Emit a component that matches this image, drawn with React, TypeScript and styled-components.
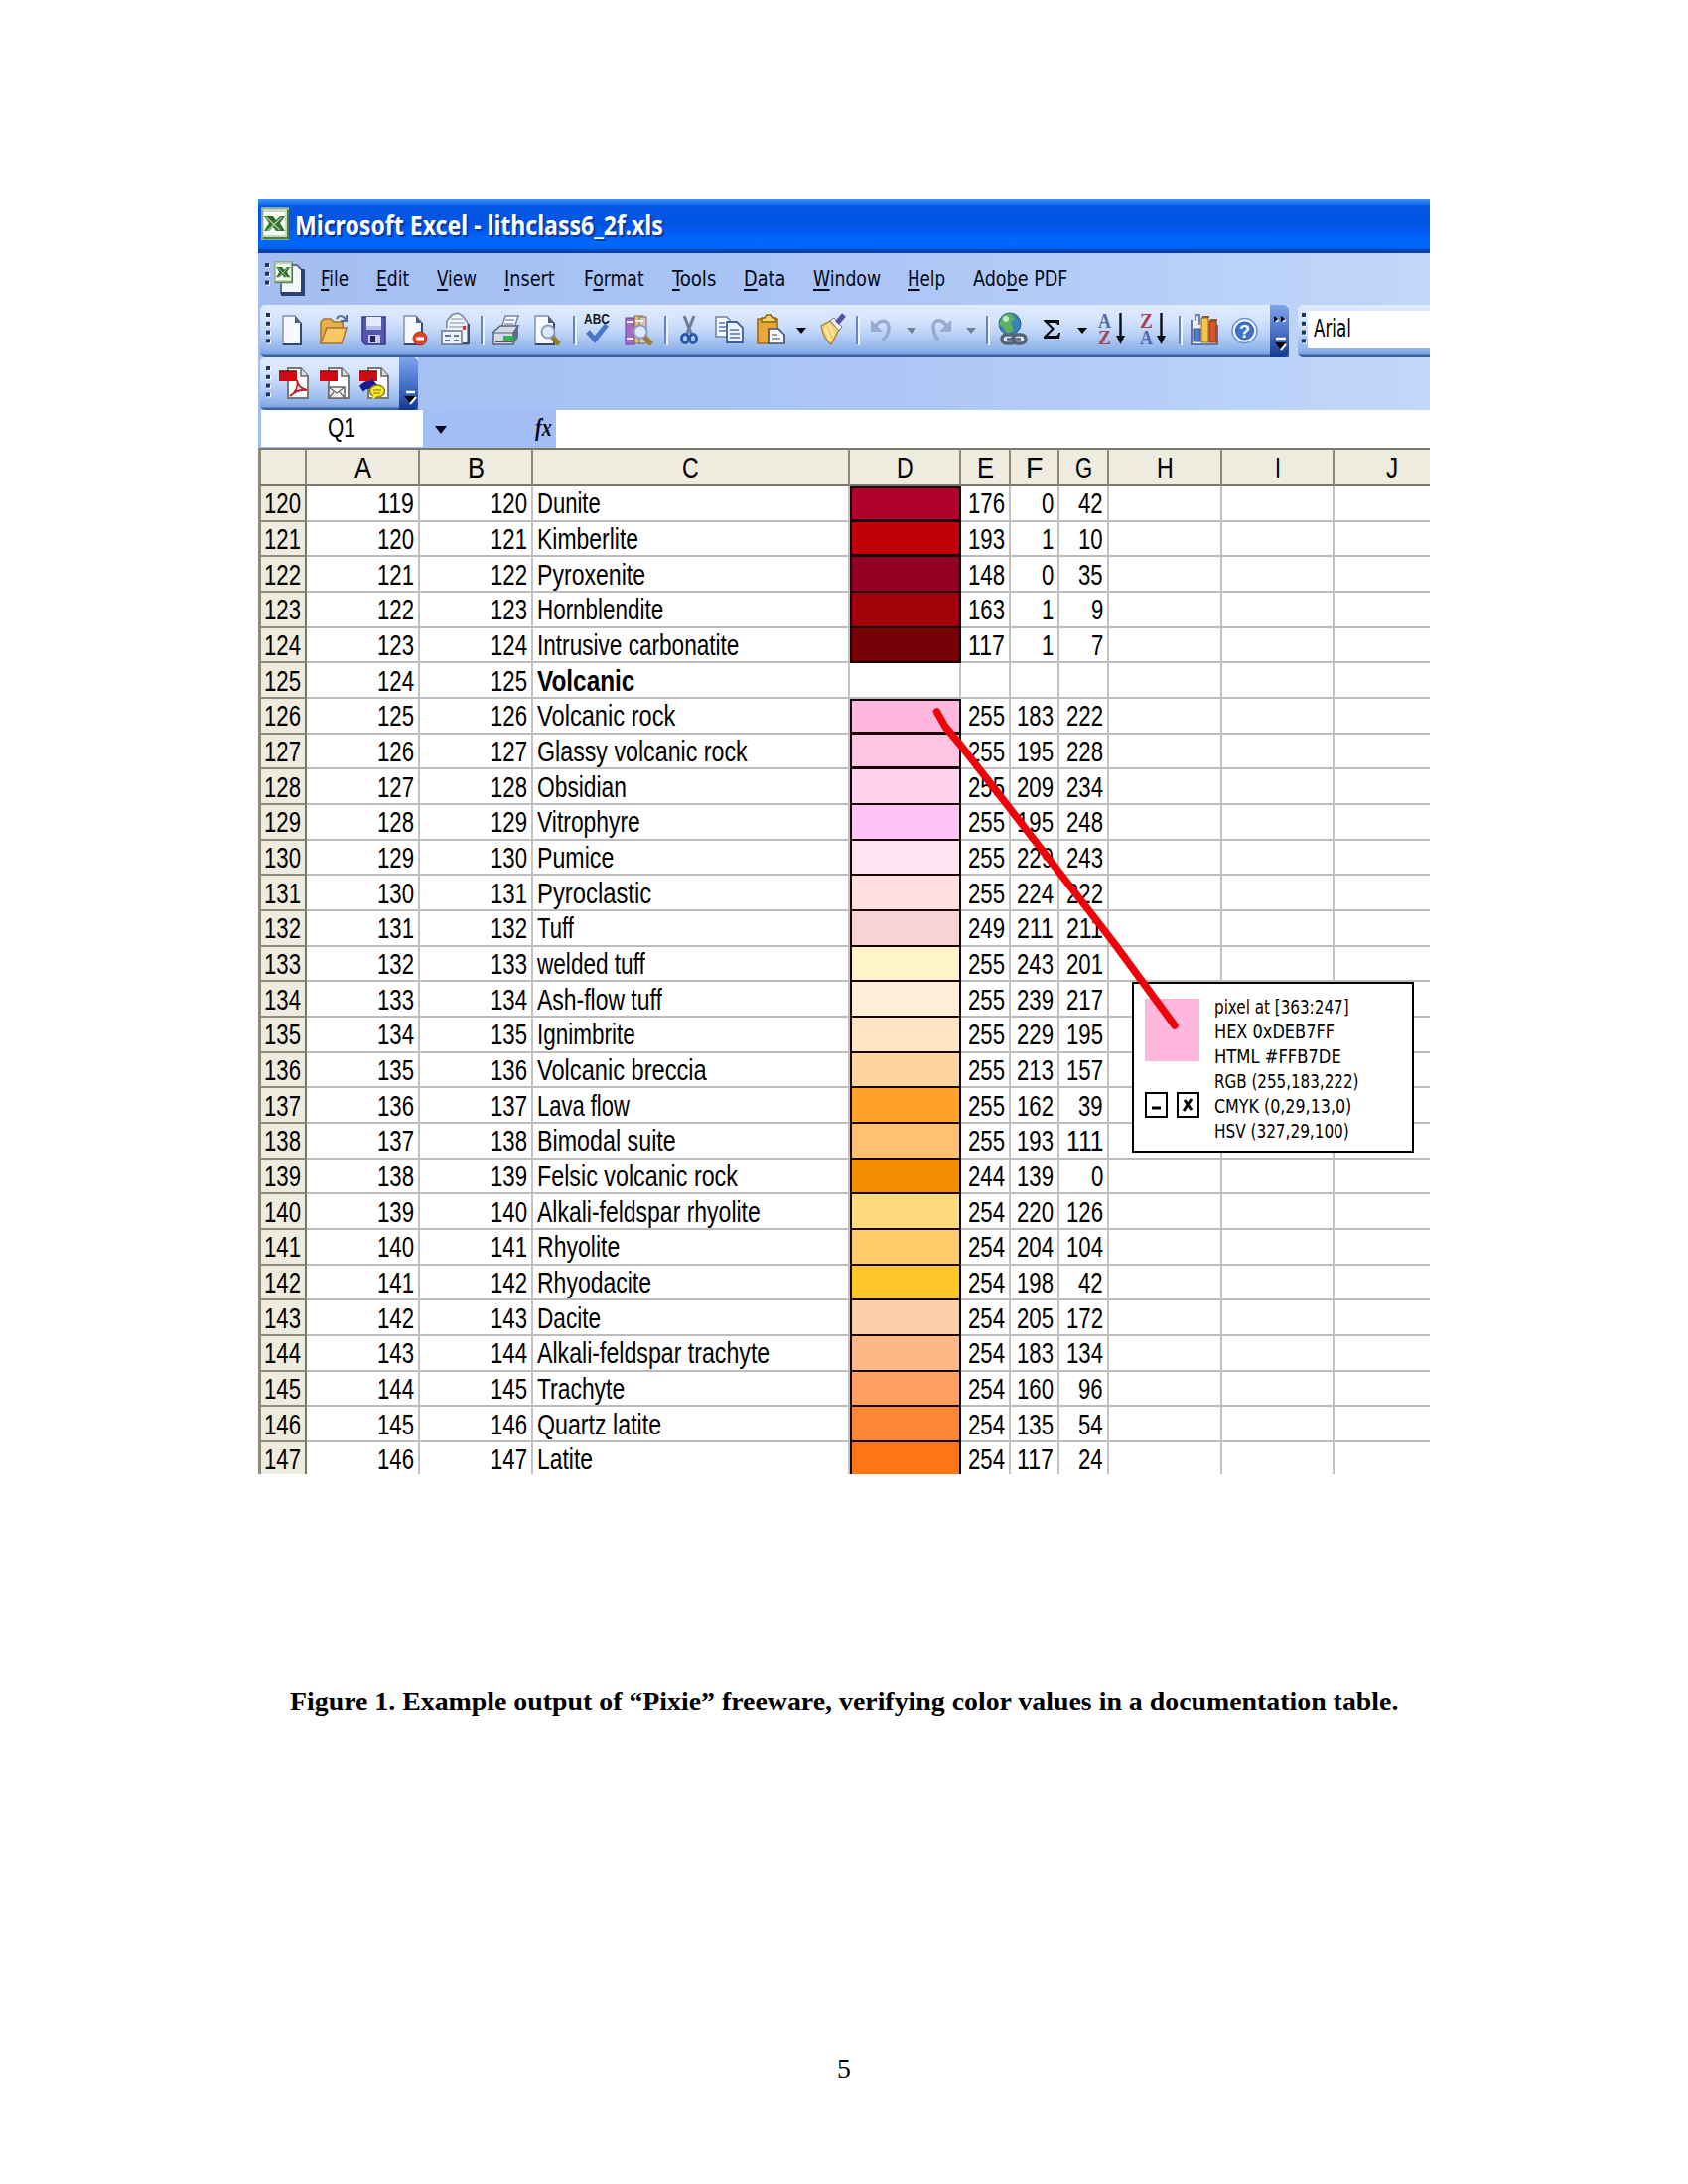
import React, { useLayoutEffect, useRef, useState } from 'react';
import styled, { createGlobalStyle } from 'styled-components';

const GlobalStyle = createGlobalStyle`
  html, body { margin: 0; padding: 0; background: #fff; }
  * { box-sizing: border-box; }
`;

const arial = '"Liberation Sans", Arial, sans-serif';
const tahoma = '"DejaVu Sans Condensed", "DejaVu Sans", Tahoma, sans-serif';
const times = '"Liberation Serif", "Times New Roman", serif';

/* ---------- text condensed to a given width ---------- */

const FitBox = styled.span<{ $w: number }>`
  display: inline-block;
  width: ${p => p.$w}px;
  white-space: nowrap;
  flex: none;
`;
const FitInner = styled.span`
  display: inline-block;
  transform-origin: 0 50%;
  white-space: pre;
`;

function Fit({ w, children }: { w: number; children: React.ReactNode }) {
  const ref = useRef<HTMLSpanElement>(null);
  const [scale, setScale] = useState(1);
  useLayoutEffect(() => {
    if (ref.current) setScale(w / ref.current.offsetWidth);
  }, [w]);
  return (
    <FitBox $w={w}>
      <FitInner ref={ref} style={{ transform: `scaleX(${scale})` }}>{children}</FitInner>
    </FitBox>
  );
}

/* ---------- page ---------- */

const Page = styled.main`
  width: 1700px;
  height: 2200px;
  padding-top: 200px;
  display: flex;
  flex-direction: column;
  align-items: center;
  background: #fff;
  color: #000;
  overflow: hidden;
`;
const Shot = styled.section`
  position: relative;
  width: 1180px;
  height: 1285px;
  flex: none;
  display: flex;
  flex-direction: column;
  overflow: hidden;
  background: #fff;
`;
const Caption = styled.p`
  margin: 213px 0 0;
  font: bold 27.8px/32px ${times};
`;
const PageNumber = styled.footer`
  margin-top: 338px;
  font: 27.8px/32px ${times};
`;

/* ---------- window chrome ---------- */

const TitleBar = styled.header`
  height: 55px;
  flex: none;
  display: flex;
  align-items: center;
  padding: 0 0 3px 3px;
  gap: 6px;
  background: linear-gradient(#3a94ff 0, #1b7af4 4px, #0458e4 8px, #0054e4 26px, #005cf8 36px, #0069ff 43px, #0064fa 50px, #0a3fae 52px, #0a3fae 55px);
`;
const Title = styled.h1`
  margin: 0;
  padding-top: 1px;
  font: bold 26px/40px "Noto Sans", "Open Sans", sans-serif;
  color: #fff;
  text-shadow: 2px 2px 1px #08379c;
`;
const MenuBar = styled.nav`
  height: 52px;
  flex: none;
  display: flex;
  align-items: flex-start;
  background: linear-gradient(90deg, #a4bef2, #aac5f6 50%, #c2d7f9);
`;
const MenuGrip = styled.div`
  margin: 8px 0 0 7px;
  height: 40px;
`;
const MenuItem = styled.div<{ $gap: number }>`
  margin-left: ${p => p.$gap}px;
  padding-top: 12px;
  font: 22px/28px ${tahoma};
  color: #06091a;
  u { text-decoration-thickness: 2px; text-underline-offset: 3px; text-decoration-skip-ink: none; }
`;
const ToolRow = styled.div`
  height: 53px;
  flex: none;
  display: flex;
  padding-left: 2px;
  gap: 9px;
  background: linear-gradient(90deg, #a4bef2, #aac5f6 50%, #c2d7f9);
`;
const toolFill = 'linear-gradient(#dfeafd 0, #d6e5fd 14px, #bdd4f8 28px, #8fb2e9 46px, #7ba2e0 50px, #3c619f 51px, #3c619f 53px)';
const ToolBar = styled.div<{ $w: number }>`
  width: ${p => p.$w}px;
  height: 53px;
  flex: none;
  display: flex;
  align-items: flex-start;
  border-radius: 5px 0 0 5px;
  background: ${toolFill};
`;
const FontBar = styled.div`
  flex: 1;
  height: 53px;
  display: flex;
  border-radius: 5px 0 0 5px;
  background: ${toolFill};
`;
const FontField = styled.div`
  flex: 1;
  height: 38px;
  margin: 6px 0 0 2px;
  padding: 4px 0 0 6px;
  background: #fff;
  font: 24px/28px ${tahoma};
`;
const Tool = styled.svg<{ $gap: number; $top: number }>`
  margin-left: ${p => p.$gap}px;
  margin-top: ${p => p.$top}px;
  height: 38px;
  flex: none;
`;
const Divider = styled.i<{ $gap: number }>`
  margin: 11px 0 0 ${p => p.$gap}px;
  width: 2px;
  height: 29px;
  flex: none;
  background: #6785bd;
  box-shadow: 2px 1px 0 #eef4ff;
`;
const EndCap = styled.div`
  width: 19px;
  height: 53px;
  margin-left: auto;
  border-radius: 0 5px 5px 0;
  background: linear-gradient(#7ea4ea, #4a73c8 50%, #123a92);
`;
const FormulaBar = styled.div`
  height: 38px;
  flex: none;
  display: flex;
  background: #a3bef3;
`;
const NameBox = styled.div`
  width: 163px;
  height: 37px;
  margin-left: 3px;
  padding-left: 67px;
  background: #fff;
  font: 27px/36px ${arial};
`;
const FxZone = styled.div`
  width: 134px;
  display: flex;
  justify-content: space-between;
  padding: 0 4px 0 11px;
`;
const FxLabel = styled.span`
  font: italic bold 26px/36px ${times};
  color: #05081a;
`;
const Formula = styled.div`
  flex: 1;
  background: #fff;
`;

/* ---------- sheet ---------- */

const Sheet = styled.div`
  display: grid;
  grid-template-columns: 49px 114px 114px 319px 112px 50px 49px 50px 114px 113px 96px;
  grid-template-rows: 39px;
  grid-auto-rows: 35.68px;
  font: 28.6px/33px ${arial};
`;
const HeadCell = styled.div`
  display: flex;
  justify-content: center;
  align-items: center;
  padding-top: 1px;
  background: #eeebdf;
  border-top: 2px solid #77776c;
  border-bottom: 2px solid #77776c;
  border-right: 2px solid #8a8a7d;
  &:first-child { border-left: 3px solid #8b8b78; }
  &:nth-child(11) { border-right: 0; padding-left: 20px; }
`;
const RowHead = styled.div`
  display: flex;
  align-items: center;
  justify-content: flex-end;
  padding: 2px 4px 0 0;
  background: #eeebdf;
  border-left: 3px solid #8b8b78;
  border-right: 2px solid #77776c;
  border-bottom: 2px solid #8b8b80;
`;
const Cell = styled.div<{ $last?: boolean; $left?: boolean; $bold?: boolean }>`
  display: flex;
  align-items: center;
  justify-content: ${p => (p.$left ? 'flex-start' : 'flex-end')};
  padding: 2px 4px 0;
  font-weight: ${p => (p.$bold ? 700 : 400)};
  border-bottom: 2px solid #bcbcbc;
  border-right: ${p => (p.$last ? '0' : '2px solid #c2c2c2')};
`;
const Swatch = styled.div<{ $c: string; $top?: boolean; $thick?: boolean }>`
  background: ${p => p.$c};
  border: 2px solid #180406;
  border-top-width: ${p => (p.$top ? 2 : 0)}px;
  border-bottom-width: ${p => (p.$thick ? 3 : 2)}px;
`;

/* ---------- overlays ---------- */

const Pixie = styled.aside`
  position: absolute;
  left: 880px;
  top: 789px;
  width: 284px;
  height: 172px;
  display: flex;
  gap: 15px;
  padding: 15px 0 0 11px;
  background: #fff;
  border: 2px solid #000;
`;
const PixieSide = styled.div`
  width: 55px;
`;
const PixieColor = styled.div`
  height: 63px;
  background: #ffb7de;
`;
const PixieButtons = styled.div`
  display: flex;
  justify-content: space-between;
  margin-top: 31px;
`;
const PixieText = styled.div`
  margin-top: -4px;
  display: flex;
  flex-direction: column;
  font: 19.6px/25px ${tahoma};
`;
const Pointer = styled.svg`
  position: absolute;
  left: 670px;
  top: 500px;
`;

/* ---------- icons ---------- */

const Dots = ({ n = 4 }: { n?: number }) => (
  <>
    {Array.from({ length: n }, (_, i) => (
      <g key={i}>
        <rect x="1" y={3 + i * 8.8} width="4" height="4" fill="#fff" />
        <rect x="0" y={2 + i * 8.8} width="4" height="4" fill="#1f335f" />
      </g>
    ))}
  </>
);
const Icon = ({ gap, w, top = 6, children }: { gap: number; w: number; top?: number; children: React.ReactNode }) => (
  <Tool $gap={gap} $top={top} width={w} viewBox={`0 0 ${w} 38`} overflow="visible">{children}</Tool>
);
const Arrow = ({ gap, c = '#000' }: { gap: number; c?: string }) => (
  <Icon gap={gap} w={9}><path d="M0 17h10l-5 6z" fill={c} /></Icon>
);
const Sheetlet = ({ x = 0, y = 5, w = 19, h = 29 }: { x?: number; y?: number; w?: number; h?: number }) => (
  <g>
    <path d={`M${x + 1} ${y}h${w - 7}l6 7v${h - 7}h${-(w - 1)}z`} fill="#f6f9ff" stroke="#7c8dac" strokeWidth="1.4" />
    <path d={`M${x + w} ${y + 7}v${h - 7}h${-(w - 1)}`} fill="none" stroke="#34486f" strokeWidth="2" />
    <path d={`M${x + w - 6} ${y}v7h6z`} fill="#4b5f86" />
  </g>
);
const Xls = ({ s }: { s: number }) => (
  <g transform={`scale(${s})`}>
    <rect x="1" y="1" width="26" height="31" fill="#c9d8c4" stroke="#8fae8d" strokeWidth="2" />
    <rect x="3" y="5" width="21" height="23" fill="#fafff4" />
    <path d="M3 9h9l3 4 4-4h5l-5 7 5 8h-9l-3-4-4 4H3l5-8z" fill="#2f7130" />
    <path d="M5 10l14 13M21 10L6 24" stroke="#a9d39c" strokeWidth="1.2" />
    <path d="M2 31h25V3" fill="none" stroke="#4d7f3c" strokeWidth="2" />
  </g>
);
const Pdf = () => (
  <g>
    <path d="M9 3h13l7 8v22H9z" fill="#fff" stroke="#77797f" strokeWidth="2" />
    <path d="M22 3v8h7" fill="#ddd" stroke="#666" strokeWidth="1.5" />
    <rect x="0" y="6" width="18" height="10" fill="#cf0a12" />
    <path d="M0 6h18" stroke="#7d0a0a" strokeWidth="1.5" />
  </g>
);
const Lens = ({ x, y }: { x: number; y: number }) => (
  <g>
    <path d={`M${x + 4} ${y + 5}l7 8`} stroke="#9b7b2c" strokeWidth="5" />
    <circle cx={x} cy={y} r="6.5" fill="#dce9fb" stroke="#8c9cc0" strokeWidth="2" />
  </g>
);

const StandardTools = () => (
  <>
    <Icon gap={6} w={4}><Dots /></Icon>
    <Icon gap={12} w={20}><Sheetlet /></Icon>
    <Icon gap={17} w={30}>
      <path d="M2 33V11l3-3h7l3 3h9v6" fill="#e7b04c" stroke="#a1762e" strokeWidth="1.5" />
      <path d="M2 33l6-16h20l-5 16z" fill="#fcc767" stroke="#a87528" strokeWidth="1.5" />
      <path d="M18 8c2-4 7-4 9 1m1-5v6h-6" fill="none" stroke="#536d99" strokeWidth="2" />
    </Icon>
    <Icon gap={13} w={25}>
      <path d="M1 6h23v28H4l-3-3z" fill="#5656ad" stroke="#383987" strokeWidth="1.5" />
      <rect x="5" y="6" width="15" height="13" fill="#e5ecff" />
      <path d="M5 15h15v4H5z" fill="#b7bfe6" />
      <rect x="7" y="24" width="12" height="9" fill="#c4c9ea" />
      <rect x="9" y="25" width="5" height="7" fill="#23245f" />
    </Icon>
    <Icon gap={17} w={26}>
      <Sheetlet x={0} />
      <circle cx="17" cy="28" r="7" fill="#dd4526" stroke="#b03319" />
      <rect x="13" y="26.5" width="8" height="3" fill="#fff" />
    </Icon>
    <Icon gap={12} w={30}>
      <path d="M6 17V10l5-6 6-2 5 3 5 7v22H12" fill="#f2f5fc" stroke="#76829e" strokeWidth="1.5" />
      <path d="M9 12h15M10 8h12M8 16h17" fill="none" stroke="#a5aec2" strokeWidth="1.3" />
      <rect x="22" y="15" width="3" height="4" fill="#c23832" />
      <path d="M1 20h20v14H1z" fill="#eef3fb" stroke="#65748f" strokeWidth="1.5" />
      <path d="M4 25h6M4 30h5M13 25h5M13 30h5" stroke="#58759f" strokeWidth="2" />
      <path d="M28 13v20h-6" fill="none" stroke="#394c70" strokeWidth="2" />
    </Icon>
    <Divider $gap={10} />
    <Icon gap={10} w={28}>
      <path d="M9 17l4-12h13l-4 12z" fill="#fafcff" stroke="#7685a3" strokeWidth="1.5" />
      <path d="M13 9h9M12 13h9" stroke="#8a97b4" strokeWidth="1.3" />
      <path d="M1 21l7-6h18l-5 7v12H1z" fill="#d5dbe6" stroke="#55627c" strokeWidth="1.5" />
      <path d="M21 22l5-7v12l-5 7z" fill="#5e6d88" />
      <path d="M1 22h20" stroke="#55627c" />
      <path d="M11 25h10v7H11z" fill="#36b04a" /><path d="M3 31h17" stroke="#555" strokeWidth="2" />
    </Icon>
    <Icon gap={14} w={28}><Sheetlet x={0} w={20} /><Lens x={14} y={21} /></Icon>
    <Divider $gap={11} />
    <Icon gap={9} w={28}>
      <text x="0" y="13" fontFamily="Liberation Sans, sans-serif" fontWeight="bold" fontSize="14" textLength="26" lengthAdjust="spacingAndGlyphs" fill="#16181e">ABC</text>
      <path d="M4 21l7 8L23 14" fill="none" stroke="#4976cb" strokeWidth="5" />
    </Icon>
    <Icon gap={13} w={29}>
      <rect x="1" y="7" width="9" height="27" fill="#a66ac7" stroke="#65438b" />
      <rect x="10" y="5" width="9" height="28" fill="#e1bc73" stroke="#8b713e" />
      <rect x="15" y="6" width="7" height="27" fill="#d8c9c0" stroke="#7f6c68" />
      <path d="M2 11h7M2 28h7M11 10h8" stroke="#f4eefa" strokeWidth="2" />
      <Lens x={16} y={21} />
    </Icon>
    <Divider $gap={11} />
    <Icon gap={14} w={18}>
      <path d="M4 5l8 20M14 5L6 25" stroke="#6e7c98" strokeWidth="3" />
      <ellipse cx="5" cy="28" rx="3.5" ry="4.5" fill="none" stroke="#2858a8" strokeWidth="3" />
      <ellipse cx="13" cy="28" rx="3.5" ry="4.5" fill="none" stroke="#2858a8" strokeWidth="3" />
    </Icon>
    <Icon gap={17} w={29}>
      <path d="M1 6h11l5 6v14H1z" fill="#f7faff" stroke="#6d7fa2" strokeWidth="1.5" />
      <path d="M4 12h6M4 16h8M4 20h7" stroke="#5376b8" strokeWidth="1.5" />
      <path d="M12 11h10l6 6v15H12z" fill="#eef4ff" stroke="#3d5f9f" strokeWidth="1.8" />
      <path d="M15 19h9M15 23h10M15 27h10" stroke="#4d73b8" strokeWidth="1.5" />
    </Icon>
    <Icon gap={12} w={30}>
      <path d="M2 8h20v25H2z" fill="#eba63b" stroke="#9a6a1d" strokeWidth="1.6" />
      <path d="M6 11V7h3l2-3h4l2 3h3v4z" fill="#f4d25f" stroke="#836014" strokeWidth="1.4" />
      <path d="M13 18h10l6 6v9H13z" fill="#f4f6fc" stroke="#475371" strokeWidth="1.7" />
      <path d="M16 24h6M16 28h9" stroke="#7c8095" strokeWidth="1.5" />
    </Icon>
    <Arrow gap={11} />
    <Icon gap={15} w={26}>
      <path d="M1 15l9-5 9 9-8 15q-8-7-10-19z" fill="#f6d476" stroke="#a38138" strokeWidth="1.4" />
      <path d="M5 17l5 12M9 14l5 11" stroke="#fff0b7" strokeWidth="1.6" />
      <path d="M10 10l4-3 8 9-3 4z" fill="#eef0f6" stroke="#777" />
      <path d="M17 12l7-8" stroke="#5450a5" strokeWidth="5" />
    </Icon>
    <Divider $gap={10} />
    <Icon gap={12} w={23}>
      <path d="M5 17c4-9 14-9 14 0 0 6-2 9-6 13" fill="none" stroke="#98aad3" strokeWidth="3.4" />
      <path d="M1 9v12h12z" fill="#98aad3" />
    </Icon>
    <Arrow gap={14} c="#727e99" />
    <Icon gap={15} w={22}>
      <path d="M17 17C13 7 3 8 3 16c0 6 2 10 5 14" fill="none" stroke="#98aad3" strokeWidth="3.4" />
      <path d="M21 9v12H9z" fill="#98aad3" />
    </Icon>
    <Arrow gap={14} c="#727e99" />
    <Divider $gap={11} />
    <Icon gap={9} w={31}>
      <circle cx="13" cy="13" r="11" fill="#3b81bd" stroke="#2b5d8c" />
      <path d="M4 8q5-7 11-5l3 5-4 4 3 7-6 4-5-7-4-2z" fill="#5bb35c" />
      <circle cx="9" cy="8" r="3" fill="#bfe8c4" />
      <rect x="5" y="24" width="14" height="9" rx="4.5" fill="#dfe8f8" stroke="#56617a" strokeWidth="3.4" />
      <rect x="16" y="24" width="13" height="9" rx="4.5" fill="#dfe8f8" stroke="#56617a" strokeWidth="3.4" />
      <path d="M10 28.5h14" stroke="#56617a" strokeWidth="2.5" />
    </Icon>
    <Icon gap={15} w={19}>
      <path d="M1 9h16v5h-2q0-2-3-2H6l6 6-7 7h8q3 0 3-3h2l-1 6H1v-2l8-8-8-8z" fill="#05070f" />
    </Icon>
    <Arrow gap={16} />
    <Icon gap={12} w={28}>
      <text x="0" y="17" fontFamily="Liberation Serif, serif" fontWeight="bold" fontSize="20" textLength="13" lengthAdjust="spacingAndGlyphs" fill="#5168aa">A</text>
      <text x="0" y="34" fontFamily="Liberation Serif, serif" fontWeight="bold" fontSize="20" textLength="13" lengthAdjust="spacingAndGlyphs" fill="#a84458">Z</text>
      <path d="M22.500 2v25" stroke="#0a0c14" strokeWidth="2.400" /><path d="M18 25h9l-4.500 9z" fill="#0a0c14" />
    </Icon>
    <Icon gap={14} w={28}>
      <text x="0" y="17" fontFamily="Liberation Serif, serif" fontWeight="bold" fontSize="20" textLength="13" lengthAdjust="spacingAndGlyphs" fill="#a84458">Z</text>
      <text x="0" y="34" fontFamily="Liberation Serif, serif" fontWeight="bold" fontSize="20" textLength="13" lengthAdjust="spacingAndGlyphs" fill="#5168aa">A</text>
      <path d="M21.500 2v25" stroke="#0a0c14" strokeWidth="2.400" /><path d="M17 25h9l-4.500 9z" fill="#0a0c14" />
    </Icon>
    <Divider $gap={11} />
    <Icon gap={10} w={28}>
      <path d="M1 9v25h26V14" fill="#eef2fb" stroke="#4c5a7a" strokeWidth="1.6" />
      <path d="M5 10V4h4v10" fill="none" stroke="#6c7a98" strokeWidth="1.8" />
      <rect x="3" y="18" width="7" height="13" fill="#4e7ac7" stroke="#304f87" />
      <rect x="11" y="7" width="7" height="25" fill="#f4c64c" stroke="#8f6a1c" />
      <rect x="19" y="10" width="7" height="22" fill="#d9552a" stroke="#8a2f17" />
      <path d="M12 6h7M20 9h7" stroke="#8a5a2a" strokeWidth="2" />
    </Icon>
    <Icon gap={13} w={27}>
      <circle cx="13.500" cy="20" r="12.500" fill="#eaf2ff" stroke="#6d93cf" strokeWidth="1.500" />
      <circle cx="13.500" cy="20" r="9" fill="#3c73cb" stroke="#2c58a4" />
      <text x="13.500" y="26.500" textAnchor="middle" fontFamily="Liberation Sans, sans-serif" fontWeight="bold" fontSize="18" fill="#fff">?</text>
    </Icon>
    <EndCap>
      <svg width="19" height="53" viewBox="0 0 19 53">
        <path d="M4 11l4 3-4 3zM11 11l4 3-4 3z" fill="#000" />
        <path d="M6 17l3-2M13 17l3-2" stroke="#fff" strokeWidth="1.500" />
        <path d="M6 34h10" stroke="#fff" strokeWidth="2.500" />
        <path d="M5 38h11l-5.500 7z" fill="#000" /><path d="M16 40l-5 6" stroke="#fff" strokeWidth="2" />
      </svg>
    </EndCap>
  </>
);

const PdfTools = () => (
  <>
    <Icon gap={6} w={4} top={7}><Dots /></Icon>
    <Icon gap={9} w={30} top={8}>
      <Pdf />
      <path d="M11 31c6-4 9-10 7-16 1 6 5 9 10 10-6-1-12 1-17 6z" fill="none" stroke="#c61a1e" strokeWidth="1.800" />
    </Icon>
    <Icon gap={11} w={30} top={8}>
      <Pdf />
      <rect x="9" y="22" width="16" height="11" fill="#f5f5f5" stroke="#666" strokeWidth="1.500" />
      <path d="M9 22l8 6 8-6M9 33l5-6M25 33l-5-6" fill="none" stroke="#666" strokeWidth="1.300" />
    </Icon>
    <Icon gap={10} w={30} top={8}>
      <Pdf />
      <path d="M0 21q5-6 12-5v-3l7 8-7 7v-4q-6-1-8 3z" fill="#1a1a94" />
      <ellipse cx="18" cy="26" rx="7.500" ry="6" fill="#f7ea2c" stroke="#87800f" strokeWidth="1.500" />
      <path d="M14 30l-1 5 5-4z" fill="#f7ea2c" />
      <path d="M14 25h8M14 28h7" stroke="#7d750c" strokeWidth="1.200" />
    </Icon>
    <EndCap>
      <svg width="19" height="53" viewBox="0 0 19 53">
        <path d="M7 35h9" stroke="#fff" strokeWidth="2.500" />
        <path d="M5 39h12l-6 7z" fill="#000" /><path d="M17 40l-6 7" stroke="#fff" strokeWidth="2" />
      </svg>
    </EndCap>
  </>
);

/* ---------- data ---------- */

type RowData = [number, string, number, [number, number, number] | null];
const rows: RowData[] = [
  [120, 'Dunite', 64, [176, 0, 42]],
  [121, 'Kimberlite', 102, [193, 1, 10]],
  [122, 'Pyroxenite', 109, [148, 0, 35]],
  [123, 'Hornblendite', 127, [163, 1, 9]],
  [124, 'Intrusive carbonatite', 203, [117, 1, 7]],
  [125, 'Volcanic', 98, null],
  [126, 'Volcanic rock', 139, [255, 183, 222]],
  [127, 'Glassy volcanic rock', 212, [255, 195, 228]],
  [128, 'Obsidian', 90, [255, 209, 234]],
  [129, 'Vitrophyre', 104, [255, 195, 248]],
  [130, 'Pumice', 77, [255, 229, 243]],
  [131, 'Pyroclastic', 115, [255, 224, 222]],
  [132, 'Tuff', 37, [249, 211, 211]],
  [133, 'welded tuff', 109, [255, 243, 201]],
  [134, 'Ash-flow tuff', 126, [255, 239, 217]],
  [135, 'Ignimbrite', 99, [255, 229, 195]],
  [136, 'Volcanic breccia', 171, [255, 213, 157]],
  [137, 'Lava flow', 93, [255, 162, 39]],
  [138, 'Bimodal suite', 140, [255, 193, 111]],
  [139, 'Felsic volcanic rock', 202, [244, 139, 0]],
  [140, 'Alkali-feldspar rhyolite', 225, [254, 220, 126]],
  [141, 'Rhyolite', 83, [254, 204, 104]],
  [142, 'Rhyodacite', 115, [254, 198, 42]],
  [143, 'Dacite', 64, [254, 205, 172]],
  [144, 'Alkali-feldspar trachyte', 234, [254, 183, 134]],
  [145, 'Trachyte', 88, [254, 160, 96]],
  [146, 'Quartz latite', 125, [254, 135, 54]],
  [147, 'Latite', 56, [254, 117, 24]],
];
const thick = [120, 121, 126, 127];

const menus: [number, number, string, string, string][] = [
  [14, 28, '', 'F', 'ile'],
  [28, 33, '', 'E', 'dit'],
  [28, 40, '', 'V', 'iew'],
  [28, 51, '', 'I', 'nsert'],
  [29, 61, 'F', 'o', 'rmat'],
  [28, 44, '', 'T', 'ools'],
  [28, 42, '', 'D', 'ata'],
  [28, 68, '', 'W', 'indow'],
  [27, 38, '', 'H', 'elp'],
  [28, 95, 'Ado', 'b', 'e PDF'],
];
const readout: [string, number][] = [
  ['pixel at [363:247]', 136],
  ['HEX 0xDEB7FF', 121],
  ['HTML #FFB7DE', 128],
  ['RGB (255,183,222)', 145],
  ['CMYK (0,29,13,0)', 138],
  ['HSV (327,29,100)', 136],
];

const Num = ({ n }: { n: number }) => <Fit w={String(n).length * 12.4}>{n}</Fit>;

export default function App() {
  return (
    <Page>
      <GlobalStyle />
      <Shot>
        <TitleBar>
          <svg width="28" height="34" viewBox="0 0 28 34"><Xls s={1} /></svg>
          <Title><Fit w={371}>Microsoft Excel - lithclass6_2f.xls</Fit></Title>
        </TitleBar>
        <MenuBar>
          <MenuGrip>
            <svg width="42" height="38" viewBox="0 0 42 38">
              <Dots n={3} />
              <path d="M16 4h16l6 6v22H16z" fill="#f4f7ff" stroke="#5a6f9c" strokeWidth="2" />
              <path d="M16 33h22V8" fill="none" stroke="#2c4275" strokeWidth="4" />
              <g transform="translate(9 0)"><Xls s={0.68} /></g>
            </svg>
          </MenuGrip>
          {menus.map(([gap, w, a, b, c]) => (
            <MenuItem key={a + b + c} $gap={gap}><Fit w={w}>{a}<u>{b}</u>{c}</Fit></MenuItem>
          ))}
        </MenuBar>
        <ToolRow>
          <ToolBar $w={1036}><StandardTools /></ToolBar>
          <FontBar>
            <Icon gap={4} w={4}><Dots /></Icon>
            <FontField><Fit w={38}>Arial</Fit></FontField>
          </FontBar>
        </ToolRow>
        <ToolRow>
          <ToolBar $w={159}><PdfTools /></ToolBar>
        </ToolRow>
        <FormulaBar>
          <NameBox><Fit w={28}>Q1</Fit></NameBox>
          <FxZone>
            <svg width="14" height="38" viewBox="0 0 14 38"><path d="M1 16h12l-6 8z" fill="#050a24" /></svg>
            <FxLabel><Fit w={17}>fx</Fit></FxLabel>
          </FxZone>
          <Formula />
        </FormulaBar>
        <Sheet>
          {['', 'A', 'B', 'C', 'D', 'E', 'F', 'G', 'H', 'I', 'J'].map(h => (
            <HeadCell key={h}>{h && <Fit w={h === 'I' ? 6 : h === 'J' ? 12 : 17}>{h}</Fit>}</HeadCell>
          ))}
          {rows.map(([n, name, w, rgb]) => (
            <React.Fragment key={n}>
              <RowHead><Num n={n} /></RowHead>
              <Cell><Num n={n - 1} /></Cell>
              <Cell><Num n={n} /></Cell>
              <Cell $left $bold={!rgb}><Fit w={w}>{name}</Fit></Cell>
              {rgb
                ? <Swatch $c={`rgb(${rgb.join(',')})`} $top={n === 120 || n === 126} $thick={thick.includes(n)} />
                : <Cell />}
              {[0, 1, 2].map(i => <Cell key={i}>{rgb && <Num n={rgb[i]} />}</Cell>)}
              <Cell /><Cell /><Cell $last />
            </React.Fragment>
          ))}
        </Sheet>
        <Pixie>
          <PixieSide>
            <PixieColor />
            <PixieButtons>
              <svg width="23" height="26" viewBox="0 0 23 26"><rect x="1" y="1" width="21" height="24" fill="#fff" stroke="#000" strokeWidth="2" /><path d="M7 16h9" stroke="#000" strokeWidth="3" /></svg>
              <svg width="23" height="26" viewBox="0 0 23 26"><rect x="1" y="1" width="21" height="24" fill="#fff" stroke="#000" strokeWidth="2" /><path d="M8 8l7 10M15 7L7 19" stroke="#000" strokeWidth="3" /></svg>
            </PixieButtons>
          </PixieSide>
          <PixieText>
            {readout.map(([t, w]) => <Fit key={t} w={w}>{t}</Fit>)}
          </PixieText>
        </Pixie>
        <Pointer width="270" height="350" viewBox="0 0 270 350">
          <path d="M13.500 17L22 32L37 50L72 95L192 250L253 333" fill="none" stroke="#ee0408" strokeWidth="7.500" strokeLinecap="round" strokeLinejoin="round" />
        </Pointer>
      </Shot>
      <Caption><Fit w={1116}>Figure 1. Example output of “Pixie” freeware, verifying color values in a documentation table.</Fit></Caption>
      <PageNumber>5</PageNumber>
    </Page>
  );
}
